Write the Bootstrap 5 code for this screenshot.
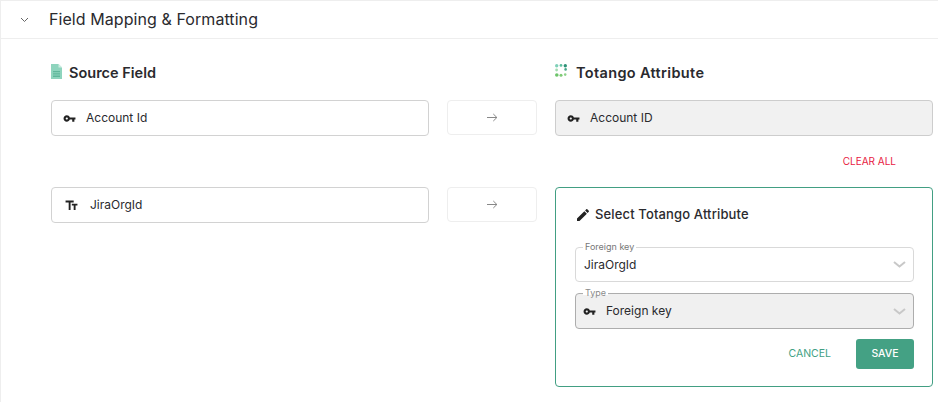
<!DOCTYPE html>
<html lang="en">
<head>
<meta charset="utf-8">
<title>Field Mapping</title>
<link href="https://cdn.jsdelivr.net/npm/bootstrap@5.3.0/dist/css/bootstrap.min.css" rel="stylesheet">
<style>
html,body{height:402px;overflow:hidden;background:#fff}
body{font-family:"Inter","Liberation Sans",sans-serif;color:#2a2a2e}
.shell{border-left:1px solid #eee;border-top:1px solid #eee;height:402px}
.sec-head{height:38px;border-bottom:1px solid #eee;padding-left:19px}
.sec-head .ttl{font-size:16px;margin-left:20px;line-height:1;letter-spacing:.07px;margin-top:-1px}
.map-grid{display:grid;grid-template-columns:378px 90px 378px;column-gap:18px;padding:24px 0 0 50px;align-items:start}
.col-ttl{font-size:14.5px;font-weight:600;line-height:20px;height:37px;display:flex;align-items:flex-start;gap:7px;margin:0}
.col-ttl.wide{gap:9px;letter-spacing:.35px}
.col-ttl svg{margin-top:1px}
.fld{height:36px;border:1px solid #d2d2d2;border-radius:4px;display:flex;align-items:center;font-size:12px;padding-left:11px}
.fld.off{background:#f1f1f1;border-color:#cdcdcd}
.fld .lbl{margin-left:10px}
.fld .lbl.txt{margin-left:11px}
.fld .tt-ico{margin-left:1px}
.arrow-box{height:35px;border:1px solid #eee;border-radius:4px;display:flex;align-items:center;justify-content:center}
.clear-row{grid-column:1/-1;height:51px;display:flex;align-items:center;justify-content:flex-end;padding-right:37px}
.clear-all{font-size:10px;color:#e8203f;text-decoration:none}
.pick-card{border:1px solid #429f83;border-radius:4px;height:200px;padding:18px 18px 0 19px}
.pick-ttl{font-size:13px;font-weight:500;display:flex;align-items:center;gap:4px;height:17px;margin-bottom:24px;letter-spacing:.14px}
.out-fld{border:1px solid #d9d9d9;border-radius:4px;padding:0 7px 0 8px;margin:0;height:35px;display:flex;align-items:center;justify-content:space-between;position:relative;font-size:12px}
.out-fld.off{background:#f0f0f0;border-color:#adadad;margin-top:11px;height:36px;padding-left:7px}
.mini-lbl{position:absolute;top:-7px;left:7px;font-size:9px;line-height:11px;color:#777;background:linear-gradient(#fff 70%,transparent 70%);padding:0 2px}
.out-fld.off .mini-lbl{color:#8a8a8a}
.key-txt{margin-left:10px}
.acts{display:flex;justify-content:flex-end;align-items:center;gap:25px;margin-top:10px}
.btn-cancel{font-size:10.5px;color:#429f83;padding:0;border:0;background:none}
.btn-save{font-size:10.5px;font-weight:500;color:#fff;background:#44a184;border:0;border-radius:3px;width:58px;height:30px;padding:0}
.btn-save:hover{background:#44a184;color:#fff}
</style>
</head>
<body>
<div class="shell">
  <div class="sec-head d-flex align-items-center">
    <svg width="9" height="6" viewBox="0 0 9 6" class="flex-shrink-0"><path d="M1 1l3.5 3.5L8 1" fill="none" stroke="#666" stroke-width="1"/></svg>
    <span class="ttl">Field Mapping &amp; Formatting</span>
  </div>
  <div class="map-grid">
    <div class="col-ttl">
      <svg width="11" height="15" viewBox="0 0 11 15" class="flex-shrink-0"><path d="M0 0h7.5L11 3.5V15H0z" fill="#8ed4bd"/><path d="M7.5 0L11 3.5H7.5z" fill="#cfeee3"/><path d="M2 7h7v1.3H2zM2 9.3h7v1.3H2zM2 11.6h7v1.3H2z" fill="#5fb69b"/></svg>
      <span>Source Field</span>
    </div>
    <div></div>
    <div class="col-ttl wide">
      <svg width="12" height="13" viewBox="0 0 12 13" class="flex-shrink-0">
        <circle cx="1.7" cy="1.8" r="1.7" fill="#7fd0b8"/><circle cx="6" cy="1.4" r="1.4" fill="#5fbfa0"/><circle cx="10.3" cy="1.8" r="1.7" fill="#2f9278"/><circle cx="10.6" cy="5.4" r="1.3" fill="#4aa98c"/>
        <circle cx="1.6" cy="6" r="1.4" fill="#a3dcb0"/><circle cx="1.8" cy="11" r="1.8" fill="#6cc46a"/><circle cx="6" cy="11.2" r="1.5" fill="#7fcb76"/><circle cx="10.2" cy="10.6" r="1.3" fill="#8ed28a"/>
      </svg>
      <span>Totango Attribute</span>
    </div>

    <div class="fld">
      <svg width="13" height="13" viewBox="0 0 24 24" fill="#222" class="flex-shrink-0"><path d="M12.65 10C11.83 7.67 9.61 6 7 6c-3.31 0-6 2.69-6 6s2.69 6 6 6c2.61 0 4.83-1.67 5.65-4H17v4h4v-4h2v-4H12.65zM7 14c-1.1 0-2-.9-2-2s.9-2 2-2 2 .9 2 2-.9 2-2 2z"/></svg>
      <span class="lbl">Account Id</span>
    </div>
    <div class="arrow-box">
      <svg width="11" height="9" viewBox="0 0 11 9"><path d="M0 4.5h10M6.3 1l3.6 3.5L6.3 8" fill="none" stroke="#888" stroke-width="1"/></svg>
    </div>
    <div class="fld off">
      <svg width="13" height="13" viewBox="0 0 24 24" fill="#222" class="flex-shrink-0"><path d="M12.65 10C11.83 7.67 9.61 6 7 6c-3.31 0-6 2.69-6 6s2.69 6 6 6c2.61 0 4.83-1.67 5.65-4H17v4h4v-4h2v-4H12.65zM7 14c-1.1 0-2-.9-2-2s.9-2 2-2 2 .9 2 2-.9 2-2 2z"/></svg>
      <span class="lbl">Account ID</span>
    </div>

    <div class="clear-row"><a href="#" class="clear-all">CLEAR ALL</a></div>

    <div class="fld">
      <svg width="15" height="15" viewBox="0 0 24 24" fill="#222" class="flex-shrink-0 tt-ico"><path d="M2.5 4v3h5v12h3V7h5V4h-13zm19 5h-9v3h3v7h3v-7h3V9z"/></svg>
      <span class="lbl txt">JiraOrgId</span>
    </div>
    <div class="arrow-box">
      <svg width="11" height="9" viewBox="0 0 11 9"><path d="M0 4.5h10M6.3 1l3.6 3.5L6.3 8" fill="none" stroke="#888" stroke-width="1"/></svg>
    </div>
    <div class="pick-card">
      <div class="pick-ttl">
        <svg width="16" height="16" viewBox="0 0 24 24" fill="#222" class="flex-shrink-0"><path d="M3 17.25V21h3.75L17.81 9.94l-3.75-3.75L3 17.25zM20.71 7.04c.39-.39.39-1.02 0-1.41l-2.34-2.34c-.39-.39-1.02-.39-1.41 0l-1.83 1.83 3.75 3.75 1.83-1.83z"/></svg>
        <span>Select Totango Attribute</span>
      </div>
      <div class="out-fld">
        <span class="mini-lbl">Foreign key</span>
        <span>JiraOrgId</span>
        <svg width="13" height="7" viewBox="0 0 13 7" class="flex-shrink-0"><path d="M1 1l5.5 4.5L12 1" fill="none" stroke="#c8c8c8" stroke-width="2"/></svg>
      </div>
      <div class="out-fld off">
        <span class="mini-lbl">Type</span>
        <span class="d-flex align-items-center">
          <svg width="13" height="13" viewBox="0 0 24 24" fill="#222" class="flex-shrink-0"><path d="M12.65 10C11.83 7.67 9.61 6 7 6c-3.31 0-6 2.69-6 6s2.69 6 6 6c2.61 0 4.83-1.67 5.65-4H17v4h4v-4h2v-4H12.65zM7 14c-1.1 0-2-.9-2-2s.9-2 2-2 2 .9 2 2-.9 2-2 2z"/></svg>
          <span class="key-txt">Foreign key</span>
        </span>
        <svg width="13" height="7" viewBox="0 0 13 7" class="flex-shrink-0"><path d="M1 1l5.5 4.5L12 1" fill="none" stroke="#c8c8c8" stroke-width="2"/></svg>
      </div>
      <div class="acts">
        <button type="button" class="btn btn-cancel">CANCEL</button>
        <button type="button" class="btn btn-save">SAVE</button>
      </div>
    </div>
  </div>
</div>
<script src="https://cdn.jsdelivr.net/npm/bootstrap@5.3.0/dist/js/bootstrap.bundle.min.js"></script>
</body>
</html>
